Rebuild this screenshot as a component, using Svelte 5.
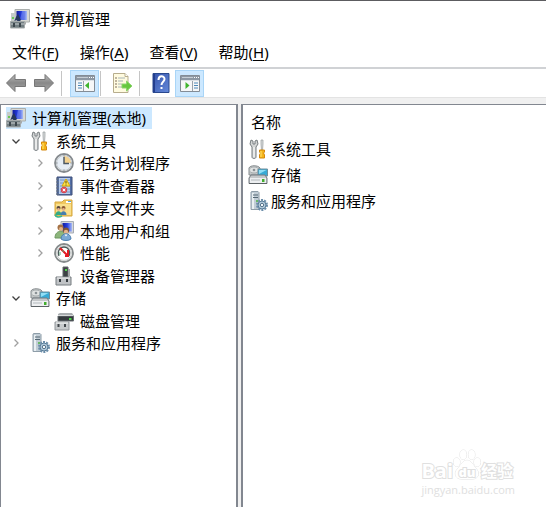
<script>
  const menus = [
    ['文件', 'F'],
    ['操作', 'A'],
    ['查看', 'V'],
    ['帮助', 'H'],
  ];

  const tree = [
    { level: 0, icon: 'computer', label: '计算机管理(本地)', selected: true },
    { level: 1, icon: 'tools', label: '系统工具', state: 'open' },
    { level: 2, icon: 'clock', label: '任务计划程序', state: 'closed' },
    { level: 2, icon: 'events', label: '事件查看器', state: 'closed' },
    { level: 2, icon: 'shared', label: '共享文件夹', state: 'closed' },
    { level: 2, icon: 'users', label: '本地用户和组', state: 'closed' },
    { level: 2, icon: 'gauge', label: '性能', state: 'closed' },
    { level: 2, icon: 'device', label: '设备管理器' },
    { level: 1, icon: 'storage', label: '存储', state: 'open' },
    { level: 2, icon: 'disk', label: '磁盘管理' },
    { level: 1, icon: 'services', label: '服务和应用程序', state: 'closed' },
  ];

  const items = [
    { icon: 'tools', label: '系统工具' },
    { icon: 'storage', label: '存储' },
    { icon: 'services', label: '服务和应用程序' },
  ];
</script>

{#snippet icon(name)}
  <svg class="icon" viewBox="0 0 20 20" aria-hidden="true">
    {#if name === 'computer'}
      <path d="M5 .5h14.500v12.500H5z" fill="#d8d9d4" stroke="#aaaead" />
      <path d="M6.500 2h10.500v9H6.500z" fill="url(#screen)" />
      <path d="M12 2h2.500l-1 9H10z" fill="#7387ed" opacity=".6" />
      <path d="M11 13h5v2.500h-5z" fill="#a9acac" />
      <path d="M1 4h4v8H1z" fill="#c5cbc9" />
      <path d="M2 8h2v2H2z" fill="#68c956" />
      <path d="m6 8 2-3 3 6-2 2-3-2-2 2z" fill="#25375c" />
      <path d="M.500 12.500h14v6.500h-14z" fill="#727e82" stroke="#a5aaab" />
      <path d="M1 15h13" stroke="#c7cdcf" />
      <path d="M3 14h2v4H3zM9 14h2v4H9z" fill="#3e484e" />
    {:else if name === 'tools'}
      <path d="M3 1 2 5l2 3v10c0 2 4 2 4 0V8l2-3-1-4-2 1v3H5V2z" fill="#d3d5d5" stroke="#777d80" />
      <path d="M6 8v10" stroke="#fff" />
      <path d="M13 1h2v4l-.500 6h-1L13 5z" fill="#d9dcdd" stroke="#969b9c" stroke-width=".7" />
      <path d="M11.500 11h5v2l-1 1 1 2v3h-5v-3l1-2-1-1z" fill="#f5b519" stroke="#d5880c" />
      <path d="M13 12v6" stroke="#ffe471" />
    {:else if name === 'clock'}
      <circle cx="10" cy="10" r="9" fill="#edf0f2" stroke="#858a8e" stroke-width="1.800" />
      <circle cx="10" cy="10" r="7.500" fill="#e6edf5" stroke="#c3c8cb" />
      <path d="M10 10V3a7 7 0 0 1 7 7z" fill="#f4d28f" />
      <path d="M10 4v6.500h5" fill="none" stroke="#4d5964" stroke-width="1.500" />
      <path d="M10 2.500v1M10 16.500v1M2.500 10h1M16.500 10h1" stroke="#737a80" />
    {:else if name === 'events'}
      <path d="M3 1h15v18H3z" fill="#536fa6" stroke="#3e4f78" />
      <path d="M5 2h11v16H5z" fill="#b8cceb" />
      <path d="M6 4h10M6 7h10M6 10h10M6 13h10M6 16h10" stroke="#7798c8" />
      <path d="M2 3h3M2 6h3M2 9h3M2 12h3M2 15h3M2 18h3" stroke="#687482" />
      <path d="m12 3 4 7H8z" fill="#ffe34a" stroke="#d8a90a" />
      <path d="M12 5v2.500M12 8.500v1" stroke="#4d451c" />
      <circle cx="10" cy="14" r="2.800" fill="#e8606a" stroke="#d5404c" />
      <path d="m8.800 12.800 2.400 2.400m0-2.400-2.400 2.400" stroke="#fff" />
    {:else if name === 'shared'}
      <path d="M1 4h7l2-2h8v16H1z" fill="#f0c75f" stroke="#d6a83f" />
      <path d="M2 6h15v11H2z" fill="#f9df8c" />
      <path d="M12 3h5v2h-5z" fill="#fff" /><path d="M14 3h3v1h-3z" fill="#5da5dc" />
      <circle cx="4.500" cy="10" r="2" fill="#56453a" /><circle cx="9.500" cy="10" r="2" fill="#8b5832" />
      <circle cx="4.500" cy="11.500" r="1.400" fill="#e6b18a" /><circle cx="9.500" cy="11.500" r="1.400" fill="#e6b18a" />
      <path d="M1.500 17c0-5 6-5 6 0z" fill="#35a884" /><path d="M6.500 17c0-5 6-5 6 0z" fill="#477fae" />
      <path d="M1 16.500c1 3 4 3 7 1.500" fill="none" stroke="#38b78d" stroke-width="1.700" />
    {:else if name === 'users'}
      <path d="M7 .500h12.500V12H7z" fill="#d5d8dc" stroke="#a6acb5" />
      <path d="M8.500 2H18v8.500H8.500z" fill="url(#screen)" />
      <circle cx="6.500" cy="6.500" r="3" fill="#a47144" /><circle cx="7" cy="8" r="2" fill="#e3b489" />
      <path d="M1 17c0-9 11-9 11 0z" fill="#8db67c" stroke="#6d9761" />
      <circle cx="12" cy="9.500" r="3" fill="#805636" /><circle cx="12" cy="11" r="2.200" fill="#e6b58c" />
      <path d="M7 18c0-7 10-7 10 0-2 2-8 2-10 0z" fill="#7aa9d5" stroke="#4e81b2" />
      <path d="m10.500 13.500 1.500 2 1.500-2z" fill="#fff" />
    {:else if name === 'gauge'}
      <circle cx="10" cy="10" r="9" fill="#fff" stroke="#858a8b" stroke-width="1.800" />
      <circle cx="10" cy="10" r="7.400" fill="#fff" stroke="#c8cbca" />
      <path d="M5 13C3 8 6 4 10 4s7 4 5 9" fill="none" stroke="#4c5b5b" stroke-width="1.300" />
      <path d="m6 5 8 8m0-6v6h-3" stroke="#e41921" stroke-width="2" fill="none" />
      <path d="M6 9v3M9 7v2" stroke="#5dac78" />
    {:else if name === 'device'}
      <path d="M9 1h5v10H9z" fill="#3d4144" stroke="#63676a" />
      <path d="M11 3h2v2h-2z" fill="#52d54b" />
      <path d="M14 3h2v7h-2z" fill="#a2a5a7" />
      <path d="M2 11h15v8H2z" fill="#c0c3c6" stroke="#777c80" />
      <path d="M3 12h13" stroke="#f1f1f1" />
      <path d="M5 13h2v3H5zM12 13h2v3h-2z" fill="#363c40" />
    {:else if name === 'storage'}
      <path d="M1 3c1-3 9-3 11 0v7H1z" fill="#c4c8c9" stroke="#858b8e" />
      <ellipse cx="6" cy="5" rx="4.500" ry="3" fill="#dfe2e2" stroke="#a6acae" />
      <circle cx="6" cy="5" r="1.300" fill="#8a9195" />
      <path d="M10 4h9.500v7H10z" fill="#37aad5" stroke="#708f9d" />
      <path d="M11 5h7.500l-7.500 4z" fill="#91def5" />
      <path d="m3 10-2 3v5.500h18V13l-2-3z" fill="#c5c8ca" stroke="#747b80" />
      <path d="M2 13h16v5H2z" fill="#edeff1" />
      <path d="M3 15h9" stroke="#b3b9bc" />
      <path d="M14 14h2.500v3H14z" fill="#42ad2e" />
      <path d="M1 18.500h18" stroke="#5c6265" />
    {:else if name === 'disk'}
      <path d="m4 3 2-1h12l2 3v5H4z" fill="#a9adaf" />
      <path d="M4 5h15.500v5H4z" fill="#34393c" stroke="#676c70" />
      <path d="M4 4.500h15" stroke="#d7d9da" />
      <path d="M15 7h2.500v2H15z" fill="#4cd64b" />
      <path d="M1 11h14v8H1z" fill="#c7cacc" stroke="#92979b" />
      <path d="M2 12h12" stroke="#f8f8f8" />
      <path d="M3.500 13h2v3h-2zM10 13h2v3h-2z" fill="#42474b" />
    {:else if name === 'services'}
      <path d="M3 1 4 .500h6l1 1v17H3z" fill="#c1cdd6" stroke="#8e9da8" />
      <path d="M4 2h2v16H4z" fill="#e9eff2" />
      <path d="M5 4h5M5 6.500h5" stroke="#546773" />
      <path d="M8 9h2v2H8z" fill="#68b966" />
      <circle cx="14" cy="14" r="5" fill="none" stroke="#6b8eaa" stroke-width="2" stroke-dasharray="2 1.140" />
      <circle cx="14" cy="14" r="4" fill="#b3cbdc" stroke="#5a7d98" />
      <circle cx="14" cy="14" r="1.700" fill="#f3f7fa" stroke="#58758b" />
    {:else if name === 'back' || name === 'forward'}
      <path
        d="M.500 10 9 1.500v5h10.500v7H9v5z"
        transform={name === 'forward' ? 'matrix(-1 0 0 1 20 0)' : undefined}
        fill="url(#arrow)" stroke="#777" stroke-linejoin="round" />
    {:else if name === 'tree-pane' || name === 'action-pane'}
      <path d="M.500 2.500h19v16H.500z" fill="#f6f7f8" stroke="#838c96" />
      <path d="M1 3h18v4H1z" fill="#8d98a4" />
      <path d="M2 4.500h11" stroke="#c6ced5" /><path d="M14 4.500h1M16 4.500h1M18 4.500h1" stroke="#fff" />
      <path d="M1 7.500h18" stroke="#dce1e6" />
      {#if name === 'tree-pane'}
        <path d="M8.500 8v10" stroke="#9aa3ac" />
        <path d="M3 10h4M3 12.500h4M3 15h4" stroke="#4c88b8" />
        <path d="M14 9v7l-4-3.500z" fill="#40b52e" />
      {:else}
        <path d="M12.500 8v10" stroke="#9aa3ac" />
        <path d="M14 10h4M14 12.500h4M14 15h4" stroke="#4c88b8" />
        <path d="M5.500 9v7l4-3.500z" fill="#40b52e" />
      {/if}
    {:else if name === 'export'}
      <path d="M1.500 .500H13l3 3v16H1.500z" fill="#fffbe0" stroke="#b7ad8d" />
      <path d="M13 .500v3h3" fill="#fff" stroke="#b7ad8d" />
      <path d="M3 5h2M3 8h2M3 11h2M3 14h2" stroke="#806f5c" />
      <path d="M6 5h7M6 8h5M6 11h4M6 14h5" stroke="#a8b5b8" />
      <path d="M10 11h4.500V8l5.500 5-5.500 5v-3H10z" fill="#65c83e" stroke="#8cd46d" />
    {:else if name === 'help'}
      <path d="M2 .500h16v19H2z" fill="url(#book)" stroke="#29488e" />
      <path d="M3 1v18" stroke="#243e8d" stroke-width="2" />
      <path d="M7.500 7c0-5 6-4.500 6-1 0 3-3 2.500-3 6" fill="none" stroke="#fff" stroke-width="2" />
      <path d="M9.500 14h2v2h-2z" fill="#fff" />
    {/if}
  </svg>
{/snippet}

<svg class="defs" aria-hidden="true">
  <defs>
    <linearGradient id="screen"><stop stop-color="#101b99" /><stop offset=".5" stop-color="#263ee0" /><stop offset="1" stop-color="#a9bcf5" /></linearGradient>
    <linearGradient id="arrow" x2="0" y2="1"><stop stop-color="#b9b9b9" /><stop offset=".5" stop-color="#898989" /><stop offset="1" stop-color="#aaa" /></linearGradient>
    <linearGradient id="book" x2="1" y2="1"><stop stop-color="#3654ac" /><stop offset="1" stop-color="#6489d9" /></linearGradient>
  </defs>
</svg>

<div class="window">
  <header>{@render icon('computer')}<h1>计算机管理</h1></header>

  <nav>
    {#each menus as [label, key]}
      <button>{label}(<u>{key}</u>)</button>
    {/each}
  </nav>

  <div class="toolbar" role="toolbar" aria-label="工具栏">
    <button aria-label="后退">{@render icon('back')}</button>
    <button aria-label="前进">{@render icon('forward')}</button>
    <i></i>
    <button class="on" aria-label="显示/隐藏控制台树">{@render icon('tree-pane')}</button>
    <i></i>
    <button aria-label="导出列表">{@render icon('export')}</button>
    <i></i>
    <button aria-label="帮助">{@render icon('help')}</button>
    <button class="on" aria-label="显示/隐藏操作窗格">{@render icon('action-pane')}</button>
  </div>

  <main>
    <ul class="pane tree" role="tree">
      {#each tree as node}
        <li
          class="level{node.level}"
          role="treeitem"
          aria-level={node.level + 1}
          aria-selected={!!node.selected}
          aria-expanded={node.state ? node.state === 'open' : undefined}
        >
          {#if node.level > 0}
            <svg class="chevron {node.state}" viewBox="0 0 8 8" aria-hidden="true">
              {#if node.state === 'open'}<path d="m.500 2.500 3.500 3.500 3.500-3.500" />
              {:else if node.state === 'closed'}<path d="m2.500.500 3.500 3.500L2.500 7.500" />{/if}
            </svg>
          {/if}
          <span class:selected={node.selected}>{@render icon(node.icon)}{node.label}</span>
        </li>
      {/each}
    </ul>

    <section class="pane list">
      <h2>名称</h2>
      <ul>
        {#each items as item}
          <li>{@render icon(item.icon)}{item.label}</li>
        {/each}
      </ul>
    </section>
  </main>

  <div class="watermark">
    <div class="brand">
      <span>Bai</span>
      <span class="paw">
        <svg viewBox="0 0 30 34" aria-hidden="true">
          <ellipse cx="4" cy="14" rx="3.500" ry="4.500" /><ellipse cx="11" cy="6" rx="3.500" ry="5" />
          <ellipse cx="20" cy="6" rx="3.500" ry="5" /><ellipse cx="26" cy="14" rx="3.500" ry="4.500" />
          <path d="M15 12c5 0 6 5 10 9 5 6 1 11-4 11H9c-6 0-9-6-4-11 4-4 5-9 10-9z" />
        </svg>
        <b>du</b>
      </span>
      <span class="cjk">经验</span>
    </div>
    <small>jingyan.baidu.com</small>
  </div>
</div>

<style>
  :global(body) { margin: 0; background: #fff; }

  .window {
    position: relative;
    display: flex;
    flex-direction: column;
    min-height: 100vh;
    box-sizing: border-box;
    border-top: 1px solid #5c5c60;
    overflow: hidden;
    background: #fff;
    color: #000;
    font: 15px/22px "Noto Sans", "Noto Sans CJK SC", sans-serif;
  }
  .defs { position: absolute; width: 0; height: 0; }
  .icon { flex: none; width: 20px; height: 20px; }
  h1, h2, ul { margin: 0; padding: 0; font: inherit; list-style: none; }
  button { border: 0; padding: 0; background: none; color: inherit; font: inherit; }

  header { display: flex; align-items: center; gap: 5px; height: 36px; padding-left: 10px; }
  nav { display: flex; align-items: center; gap: 21px; height: 30px; padding-left: 12px; }
  u { text-underline-offset: 2px; }

  .toolbar {
    display: flex;
    align-items: center;
    height: 28px;
    padding-left: 2px;
    border-top: 2px solid #d0d2d5;
  }
  .toolbar button {
    display: flex;
    align-items: center;
    justify-content: center;
    box-sizing: border-box;
    width: 28px;
    height: 27px;
  }
  .toolbar .on { width: 29px; border: 1px solid #a9d5f7; background: #cce8ff; }
  .toolbar i { width: 1px; height: 25px; margin-right: 7px; background: #c5c5c5; }
  .toolbar i:nth-of-type(1) { margin-left: 3px; margin-right: 8px; }
  .toolbar i:nth-of-type(2) { margin-left: 1px; }
  .toolbar i:nth-of-type(3) { margin-left: 3px; }

  main {
    display: grid;
    grid-template-columns: 238px 1fr;
    gap: 3px;
    flex: 1;
    padding-top: 6px;
    border-top: 1px solid #e3e3e3;
    background: #f0f0f0;
  }
  .pane { border: solid #828790; border-width: 1px 2px 0 1px; background: #fff; }
  .list { border-width: 1px 0 0 2px; }

  .tree { padding-top: 2px; }
  .tree li { display: flex; align-items: center; height: 22px; }
  .tree li:nth-child(even) { height: 23px; }
  .tree span { display: flex; align-items: center; gap: 6px; height: 22px; }
  .tree .level0 { padding-left: 5px; }
  .tree .level1 { padding-left: 11px; }
  .tree .level2 { padding-left: 35px; }
  .tree .selected { padding-right: 6px; background: #cce8ff; }
  .chevron { width: 8px; height: 8px; margin-right: 10px; fill: none; stroke: #a0a0a0; stroke-width: 1.3; }
  .chevron.open { stroke: #404040; }

  h2 { padding: 6px 8px 3px; }
  .list li { display: flex; align-items: center; gap: 3px; height: 26px; padding-left: 5px; }

  .watermark {
    position: absolute;
    right: 31px;
    bottom: 10px;
    color: #fff;
    font-family: "Open Sans", "Noto Sans CJK SC", sans-serif;
    -webkit-text-stroke: 2px #e0e0e0;
    paint-order: stroke fill;
  }
  .brand { display: flex; align-items: flex-end; height: 34px; font-size: 20px; font-weight: 700; line-height: 24px; }
  .paw { position: relative; width: 28px; height: 34px; }
  .paw svg { display: block; width: 28px; height: 32px; fill: #fff; stroke: #dedede; }
  .paw b { position: absolute; left: 0; right: 0; bottom: 3px; text-align: center; font-size: 13px; line-height: 16px; }
  .cjk { font-size: 16px; }
  small { display: block; color: #e0e0e0; font-size: 11px; line-height: 14px; -webkit-text-stroke: 0; }
</style>
